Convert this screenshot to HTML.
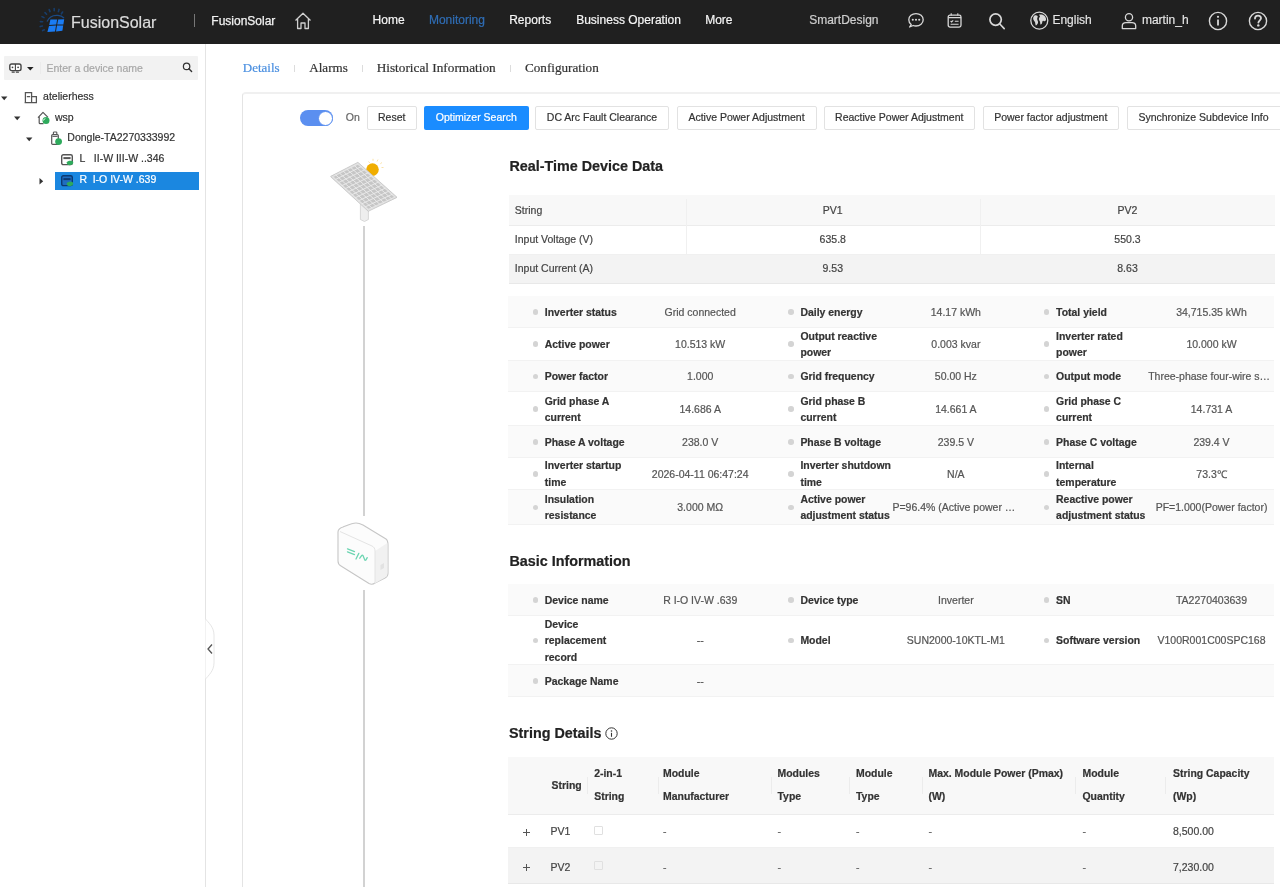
<!DOCTYPE html>
<html><head><meta charset="utf-8">
<style>
html,body{margin:0;padding:0;}
body{width:1280px;height:887px;overflow:hidden;position:relative;background:#fff;font-family:'Liberation Sans', sans-serif;}
.t{position:absolute;white-space:nowrap;line-height:1;-webkit-text-stroke-width:0.2px;}
svg{position:absolute;overflow:visible;}
</style></head><body>
<div style="position:absolute;left:0;top:0;width:1280px;height:887px;overflow:hidden;will-change:transform;background:#fff">

<div style="position:absolute;left:0px;top:0px;width:1280px;height:44px;background:#202020"></div>
<svg style="left:34px;top:4px" width="36" height="34" viewBox="0 0 36 34">
<g stroke="#173d6b" stroke-width="1.6" stroke-linecap="round">
<path d="M6.2 22.6 L8.4 22"/><path d="M6.4 17.6 L8.6 17.8"/><path d="M8 12.6 L10 13.6"/>
<path d="M11 8.6 L12.6 10.2"/><path d="M15.2 5.6 L16 7.6"/><path d="M20.2 4.6 L20.2 6.8"/>
<path d="M25 5.4 L24.4 7.6"/><path d="M28.6 8 L27.4 9.8"/><path d="M8.6 26.6 L10.4 25.8"/>
</g>
<path d="M13 17.6 C15 13 19.5 11 24 11.4 C26.5 11.6 28.5 12.6 30 14" stroke="#1b4a85" stroke-width="1.3" fill="none"/>
<g fill="#1a7cf5">
<polygon points="16.4,15.6 23.2,15.4 22.2,20.6 15.2,21"/>
<polygon points="24.2,15.4 30.2,15.2 29.4,20.4 23.2,20.6"/>
<polygon points="15,22 22,21.6 21,27.4 13.4,28"/>
<polygon points="23,21.6 29.2,21.4 28.4,26.8 22,27.4"/>
</g></svg>
<div class="t" style="left:71.00px;top:14.86px;font-size:16px;color:#dcdcdc;font-weight:normal;font-family:'Liberation Sans', sans-serif;">FusionSolar</div>
<div style="position:absolute;left:194px;top:14px;width:1px;height:13px;background:#777"></div>
<div class="t" style="left:211.30px;top:15.04px;font-size:12px;color:#f2f2f2;font-weight:normal;font-family:'Liberation Sans', sans-serif;-webkit-text-stroke:0.25px #f2f2f2;">FusionSolar</div>
<svg style="left:294px;top:12px" width="18" height="18" viewBox="0 0 18 18">
<path d="M1.5 8.5 L9 1.2 L16.5 8.5 M3.6 6.8 V16.5 H7 V11 H11 V16.5 H14.4 V6.8" fill="none" stroke="#d0d0d0" stroke-width="1.3" stroke-linejoin="round"/>
</svg>
<div class="t" style="left:372.60px;top:13.74px;font-size:12px;color:#f5f5f5;font-weight:normal;font-family:'Liberation Sans', sans-serif;-webkit-text-stroke:0.2px #f5f5f5;">Home</div>
<div class="t" style="left:428.90px;top:13.74px;font-size:12px;color:#2f6db5;font-weight:normal;font-family:'Liberation Sans', sans-serif;">Monitoring</div>
<div class="t" style="left:509.20px;top:13.74px;font-size:12px;color:#f5f5f5;font-weight:normal;font-family:'Liberation Sans', sans-serif;-webkit-text-stroke:0.2px #f5f5f5;">Reports</div>
<div class="t" style="left:576.20px;top:13.74px;font-size:12px;color:#f5f5f5;font-weight:normal;font-family:'Liberation Sans', sans-serif;-webkit-text-stroke:0.2px #f5f5f5;">Business Operation</div>
<div class="t" style="left:705.20px;top:13.74px;font-size:12px;color:#f5f5f5;font-weight:normal;font-family:'Liberation Sans', sans-serif;-webkit-text-stroke:0.2px #f5f5f5;">More</div>
<div class="t" style="left:809.20px;top:13.74px;font-size:12px;color:#cfcfcf;font-weight:normal;font-family:'Liberation Sans', sans-serif;">SmartDesign</div>
<svg style="left:907px;top:12px" width="18" height="17" viewBox="0 0 18 17">
<path d="M4.2 12.6 C2.6 11.4 1.8 9.8 1.8 7.8 C1.8 4.2 5 1.6 9 1.6 C13 1.6 16.2 4.2 16.2 7.8 C16.2 11.4 13 14 9 14 C8 14 7 13.8 6.2 13.5 L2.6 15 Z" fill="none" stroke="#d8d8d8" stroke-width="1.3" stroke-linejoin="round"/>
<circle cx="5.8" cy="7.8" r="1.05" fill="#d8d8d8"/><circle cx="9" cy="7.8" r="1.05" fill="#d8d8d8"/><circle cx="12.2" cy="7.8" r="1.05" fill="#d8d8d8"/>
</svg>
<svg style="left:946px;top:12px" width="17" height="17" viewBox="0 0 17 17">
<rect x="2.2" y="3.2" width="12.8" height="11.9" rx="1.8" fill="none" stroke="#d8d8d8" stroke-width="1.3"/>
<path d="M5.2 1.2 V3.6 M11.8 1.2 V3.6 M2.2 5.6 H15 M4.6 9 L5.6 10 L7.2 8.4 M8.8 9.2 H12.6 M4.6 12.2 H12.6" fill="none" stroke="#d8d8d8" stroke-width="1.1"/>
</svg>
<svg style="left:988px;top:12px" width="18" height="18" viewBox="0 0 18 18">
<circle cx="7.6" cy="7.6" r="5.7" fill="none" stroke="#d8d8d8" stroke-width="1.7"/>
<path d="M11.6 11.8 L16.2 16.6" stroke="#d8d8d8" stroke-width="1.6" stroke-linecap="round"/>
</svg>
<svg style="left:1030px;top:11px" width="19" height="19" viewBox="0 0 19 19">
<circle cx="9.3" cy="9.6" r="8.5" fill="none" stroke="#d8d8d8" stroke-width="1.3"/>
<path d="M4.5 4.6 C5.5 4 7 4.2 7.6 5 C8 6 7 7 7.2 8.2 C7.4 9.5 8.4 10.6 8 12 C7.6 13.2 6.6 14.2 5.8 14.6 C5.2 13 5.4 11.4 4.6 10.4 C3.6 9.4 3 8.2 3.2 6.8 C3.4 5.8 3.8 5 4.5 4.6 Z" fill="#d8d8d8"/>
<path d="M9.2 3.6 C11 3.2 13 3.6 14.4 4.8 C15.6 6 16.2 7.4 16 9 C15.4 10.2 14.4 10.6 13.6 10 C12.8 9.4 12.4 10.4 12.2 11.6 C12 12.8 11.2 13.8 10.6 13.6 C10 12.6 10.4 11.2 9.8 10.2 C9.2 9.2 8.6 8.4 9 7.2 C9.4 6.2 10.4 5.8 9.8 5 C9.4 4.6 9 4.2 9.2 3.6 Z" fill="#d8d8d8"/>
</svg>
<div class="t" style="left:1052.40px;top:13.64px;font-size:12px;color:#e6e6e6;font-weight:normal;font-family:'Liberation Sans', sans-serif;-webkit-text-stroke:0.15px #e6e6e6;">English</div>
<svg style="left:1121px;top:12px" width="16" height="18" viewBox="0 0 16 18">
<circle cx="8" cy="5.2" r="3.6" fill="none" stroke="#d8d8d8" stroke-width="1.3"/>
<path d="M1.3 16.6 V13.8 C1.3 11.6 3 10.6 5 10.6 H11 C13 10.6 14.7 11.6 14.7 13.8 V16.6 Z" fill="none" stroke="#d8d8d8" stroke-width="1.3" stroke-linejoin="round"/>
</svg>
<div class="t" style="left:1141.90px;top:13.64px;font-size:12px;color:#e6e6e6;font-weight:normal;font-family:'Liberation Sans', sans-serif;-webkit-text-stroke:0.15px #e6e6e6;">martin_h</div>
<svg style="left:1208px;top:11px" width="20" height="20" viewBox="0 0 20 20">
<circle cx="10" cy="10" r="8.6" fill="none" stroke="#d8d8d8" stroke-width="1.4"/>
<circle cx="10" cy="5.8" r="1.1" fill="#d8d8d8"/><path d="M10 8.4 V14.6" stroke="#d8d8d8" stroke-width="1.8"/>
</svg>
<svg style="left:1248px;top:11px" width="20" height="20" viewBox="0 0 20 20">
<circle cx="10" cy="10" r="8.6" fill="none" stroke="#d8d8d8" stroke-width="1.4"/>
<path d="M7 7.6 C7 5.6 8.4 4.6 10 4.6 C11.8 4.6 13 5.8 13 7.3 C13 9.2 10.6 9.4 10.4 11.6" fill="none" stroke="#d8d8d8" stroke-width="1.8" stroke-linecap="round"/>
<circle cx="10.3" cy="14.4" r="1.2" fill="#d8d8d8"/>
</svg>
<div style="position:absolute;left:205px;top:44px;width:1px;height:843px;background:#e4e4e4"></div>
<div style="position:absolute;left:3.7px;top:56.2px;width:194.6px;height:23.5px;background:#f2f2f2;border-radius:1px"></div>
<svg style="left:9px;top:63px" width="13" height="11" viewBox="0 0 13 11">
<rect x="0.8" y="1" width="11.2" height="6.6" rx="1.8" fill="#fff" stroke="#444" stroke-width="1.4"/>
<path d="M6.4 1 V7.6" stroke="#444" stroke-width="1.1"/>
<circle cx="3.5" cy="4.3" r="0.9" fill="#444"/><circle cx="9.1" cy="4.3" r="0.9" fill="#444"/>
<path d="M3.2 9.2 H5.2 M7.4 9.2 H9.4" stroke="#444" stroke-width="1.2" stroke-linecap="round"/>
</svg>
<svg style="left:27px;top:66.8px" width="7" height="4" viewBox="0 0 7 4"><path d="M0 0 H6.6 L3.3 3.4 Z" fill="#222"/></svg>
<div style="position:absolute;left:39.5px;top:62px;width:1px;height:12px;background:#ebebeb"></div>
<div class="t" style="left:46.50px;top:62.71px;font-size:10.5px;color:#a8a8a8;font-weight:normal;font-family:'Liberation Sans', sans-serif;">Enter a device name</div>
<svg style="left:182px;top:62px" width="11" height="11" viewBox="0 0 11 11">
<circle cx="4.6" cy="4.4" r="3.2" fill="none" stroke="#333" stroke-width="1.25"/>
<path d="M6.9 6.8 L9.6 9.5" stroke="#333" stroke-width="1.4" stroke-linecap="round"/>
</svg>
<svg style="left:1.2px;top:95.5px" width="7" height="5" viewBox="0 0 7 5"><path d="M0 0.5 H6.4 L3.2 4.2 Z" fill="#333"/></svg>
<svg style="left:24px;top:91px" width="14" height="13" viewBox="0 0 14 13">
<path d="M1.4 11.6 V1.6 H7.6 V11.6 M7.6 5.6 H12.4 V11.6 M0.6 11.6 H13 M2.8 5.6 H6.2" fill="none" stroke="#555" stroke-width="1.25"/>
</svg>
<div class="t" style="left:43.10px;top:91.31px;font-size:10.5px;color:#333;font-weight:normal;font-family:'Liberation Sans', sans-serif;">atelierhess</div>
<svg style="left:13.5px;top:116px" width="7" height="5" viewBox="0 0 7 5"><path d="M0 0.5 H6.4 L3.2 4.2 Z" fill="#333"/></svg>
<svg style="left:37px;top:111px" width="13" height="14" viewBox="0 0 13 14">
<path d="M1 6.6 L6 1.4 L11 6.4 M2.2 5.6 V11.8 C2.2 12.4 2.6 12.7 3.2 12.7 H6.5" fill="none" stroke="#555" stroke-width="1.2" stroke-linejoin="round"/>
<circle cx="9" cy="9.6" r="3.5" fill="#2eaa5c"/>
<path d="M6 9.4 L8.4 7.4" stroke="#fff" stroke-width="0.9"/>
</svg>
<div class="t" style="left:55.00px;top:111.81px;font-size:10.5px;color:#333;font-weight:normal;font-family:'Liberation Sans', sans-serif;">wsp</div>
<svg style="left:25.8px;top:137px" width="7" height="5" viewBox="0 0 7 5"><path d="M0 0.5 H6.4 L3.2 4.2 Z" fill="#333"/></svg>
<svg style="left:50px;top:131px" width="12" height="15" viewBox="0 0 12 15">
<path d="M3.4 3.6 V1.6 C3.4 1.2 3.7 1 4.1 1 H6.1 C6.5 1 6.8 1.2 6.8 1.6 V3.6" fill="none" stroke="#555" stroke-width="1.1"/>
<rect x="1.7" y="3.6" width="6.6" height="9.8" rx="1" fill="#fff" stroke="#555" stroke-width="1.2"/>
<path d="M2.4 5.4 H7.6" stroke="#555" stroke-width="1"/>
<circle cx="8.6" cy="10.6" r="3.4" fill="#2eaa5c"/>
</svg>
<div class="t" style="left:67.30px;top:132.41px;font-size:10.5px;color:#333;font-weight:normal;font-family:'Liberation Sans', sans-serif;">Dongle-TA2270333992</div>
<svg style="left:61px;top:153.5px" width="13" height="12" viewBox="0 0 13 12">
<rect x="0.7" y="0.7" width="10.6" height="9.9" rx="1.6" fill="#fff" stroke="#555" stroke-width="1.4"/>
<path d="M2.4 4.1 H9.6" stroke="#555" stroke-width="2"/>
<path d="M5.5 8.6 C6.5 6.8 8.6 6.4 10.6 6.8 C12.2 7.2 12.6 8.4 12 9.6 C11.2 11.2 8.4 11.6 6.6 10.8 Z" fill="#2eaa5c"/>
</svg>
<div class="t" style="left:79.50px;top:153.11px;font-size:10.5px;color:#333;font-weight:normal;font-family:'Liberation Sans', sans-serif;">L</div>
<div class="t" style="left:93.80px;top:153.11px;font-size:10.5px;color:#333;font-weight:normal;font-family:'Liberation Sans', sans-serif;">II-W III-W ..346</div>
<svg style="left:39px;top:177.5px" width="5" height="7" viewBox="0 0 5 7"><path d="M0.5 0 V6.4 L4.2 3.2 Z" fill="#333"/></svg>
<div style="position:absolute;left:55px;top:171.5px;width:143.7px;height:18.5px;background:#1b87e0"></div>
<svg style="left:61px;top:175px" width="13" height="12" viewBox="0 0 13 12">
<rect x="0.7" y="0.7" width="10.6" height="9.9" rx="1.6" fill="#1f6cc0" stroke="#0c3a72" stroke-width="1.4"/>
<path d="M2.4 4.1 H9.6" stroke="#0c3a72" stroke-width="2"/>
<path d="M5.5 8.6 C6.5 6.8 8.6 6.4 10.6 6.8 C12.2 7.2 12.6 8.4 12 9.6 C11.2 11.2 8.4 11.6 6.6 10.8 Z" fill="#2eaa5c"/>
</svg>
<div class="t" style="left:79.50px;top:173.81px;font-size:10.5px;color:#fff;font-weight:normal;font-family:'Liberation Sans', sans-serif;">R</div>
<div class="t" style="left:92.70px;top:173.81px;font-size:10.5px;color:#fff;font-weight:normal;font-family:'Liberation Sans', sans-serif;">I-O IV-W .639</div>
<svg style="left:205px;top:617px" width="12" height="64" viewBox="0 0 12 64">
<path d="M0.5 2 C3 5 9 10 9 18 V46 C9 54 3 59 0.5 62" fill="#fff" stroke="#e6e6e6" stroke-width="1"/>
<path d="M7 27.5 L3 32 L7 36.5" fill="none" stroke="#555" stroke-width="1.3"/>
</svg>
<div class="t" style="left:242.80px;top:61.01px;font-size:13px;color:#4a8fe0;font-weight:normal;font-family:'Liberation Serif', serif;">Details</div>
<div style="position:absolute;left:294px;top:64.5px;width:1px;height:7px;background:#dcdcdc"></div>
<div class="t" style="left:309.30px;top:60.97px;font-size:13.05px;color:#333;font-weight:normal;font-family:'Liberation Serif', serif;">Alarms</div>
<div style="position:absolute;left:362px;top:64.5px;width:1px;height:7px;background:#dcdcdc"></div>
<div class="t" style="left:376.70px;top:60.79px;font-size:13.27px;color:#333;font-weight:normal;font-family:'Liberation Serif', serif;">Historical Information</div>
<div style="position:absolute;left:510px;top:64.5px;width:1px;height:7px;background:#dcdcdc"></div>
<div class="t" style="left:525.00px;top:60.89px;font-size:13.15px;color:#333;font-weight:normal;font-family:'Liberation Serif', serif;">Configuration</div>
<div style="position:absolute;left:242px;top:92px;width:1100px;height:900px;border-left:1px solid #e4e4e4;border-top:2px solid #f0f0f0;box-sizing:border-box;border-radius:4px 0 0 0"></div>
<div style="position:absolute;left:300px;top:110px;width:33px;height:16px;background:#5b8ff0;border-radius:8px"></div>
<div style="position:absolute;left:318px;top:110.5px;width:15px;height:15px;background:#fff;border-radius:50%;border:1px solid #5b8ff0;box-sizing:border-box"></div>
<div class="t" style="left:345.80px;top:112.41px;font-size:10.5px;color:#666;font-weight:normal;font-family:'Liberation Sans', sans-serif;">On</div>
<div style="position:absolute;left:366.6px;top:105.5px;width:50.3px;height:24px;border:1px solid #e2e2e2;border-radius:2px;box-sizing:border-box;background:#fff"></div>
<div class="t" style="left:366.60px;width:50.3px;text-align:center;top:112.11px;font-size:10.5px;color:#333;font-weight:normal;">Reset</div>
<div style="position:absolute;left:423.9px;top:105.5px;width:104.8px;height:24px;background:#1a8cff;border-radius:2px"></div>
<div class="t" style="left:423.90px;width:104.8px;text-align:center;top:112.11px;font-size:10.5px;color:#fff;font-weight:normal;">Optimizer Search</div>
<div style="position:absolute;left:535px;top:105.5px;width:134px;height:24px;border:1px solid #e2e2e2;border-radius:2px;box-sizing:border-box;background:#fff"></div>
<div class="t" style="left:535.00px;width:134px;text-align:center;top:112.11px;font-size:10.5px;color:#333;font-weight:normal;">DC Arc Fault Clearance</div>
<div style="position:absolute;left:676.5px;top:105.5px;width:140px;height:24px;border:1px solid #e2e2e2;border-radius:2px;box-sizing:border-box;background:#fff"></div>
<div class="t" style="left:676.50px;width:140px;text-align:center;top:112.11px;font-size:10.5px;color:#333;font-weight:normal;">Active Power Adjustment</div>
<div style="position:absolute;left:823.5px;top:105.5px;width:151.5px;height:24px;border:1px solid #e2e2e2;border-radius:2px;box-sizing:border-box;background:#fff"></div>
<div class="t" style="left:823.50px;width:151.5px;text-align:center;top:112.11px;font-size:10.5px;color:#333;font-weight:normal;">Reactive Power Adjustment</div>
<div style="position:absolute;left:982.5px;top:105.5px;width:136.5px;height:24px;border:1px solid #e2e2e2;border-radius:2px;box-sizing:border-box;background:#fff"></div>
<div class="t" style="left:982.50px;width:136.5px;text-align:center;top:112.11px;font-size:10.5px;color:#333;font-weight:normal;">Power factor adjustment</div>
<div style="position:absolute;left:1126.5px;top:105.5px;width:170px;height:24px;border:1px solid #e2e2e2;border-radius:2px;box-sizing:border-box;background:#fff"></div>
<div class="t" style="left:1118.50px;width:170px;text-align:center;top:112.11px;font-size:10.5px;color:#333;font-weight:normal;">Synchronize Subdevice Info</div>
<svg style="left:325px;top:150px" width="80" height="80" viewBox="0 0 80 80">
<g stroke="#f5c040" stroke-width="1" opacity="0.45">
<path d="M43.5 11.5 L44.8 13 M48 8.8 V10.8 M53 9.5 L52 11.6 M57 12.5 L55.3 13.8 M58.5 17.5 H56.5"/>
</g>
<circle cx="47.5" cy="19.6" r="6.3" fill="#f0ad00"/>
<path d="M35.4 53 V69.5 L39.5 71.5 L43.4 69.5 V58" fill="#eeeeee" stroke="#cfcfcf" stroke-width="0.8"/>
<polygon points="32.9,13.5 6.8,26.6 43.3,60 70.8,47.3" fill="#c6c6c6" stroke="#e2e2e2" stroke-width="2.2" stroke-linejoin="round"/>
<polygon points="32.9,12.3 5.6,26.5 43.3,61.3 72,47.3" fill="none" stroke="#c0c0c0" stroke-width="0.7" stroke-linejoin="round"/>
<path d="M10.53 24.73 L47.23 58.19 M14.26 22.86 L51.16 56.37 M17.99 20.99 L55.09 54.56 M21.71 19.11 L59.01 52.74 M25.44 17.24 L62.94 50.93 M29.17 15.37 L66.87 49.11 M36.35 16.57 L10.12 29.64 M39.79 19.65 L13.44 32.67 M43.24 22.72 L16.75 35.71 M46.68 25.79 L20.07 38.75 M50.13 28.86 L23.39 41.78 M53.57 31.94 L26.71 44.82 M57.02 35.01 L30.03 47.85 M60.46 38.08 L33.35 50.89 M63.91 41.15 L36.66 53.93 M67.35 44.23 L39.98 56.96" stroke="#ececec" stroke-width="0.9" fill="none"/>
</svg>
<div style="position:absolute;left:363.2px;top:226px;width:1.4px;height:290px;background:#d2d2d2"></div>
<div style="position:absolute;left:363.2px;top:590.2px;width:1.4px;height:300px;background:#d2d2d2"></div>
<svg style="left:330px;top:515px" width="65" height="80" viewBox="0 0 65 80">
<path d="M8 17 C8 14 10 13 13 12 C18 10 22 8 26 8 C29 8 31 9 33 10 L56 24 C58 25.5 58 27 58 30 V58 C58 61 57 62 55 63 L45 68 C43 69.5 41 69.5 39 68.5 L11 51 C9 50 8 48 8 46 Z" fill="#fcfcfc" stroke="#c6c6c6" stroke-width="1.1"/>
<path d="M45 36 L57.4 28 V58 C57.4 60.6 56.6 61.6 55 62.6 L45 68.2 Z" fill="#f1f1f1"/>
<path d="M10 16.5 L42 31 C44 32 45 33.5 45 36 V68.5" fill="none" stroke="#e4e4e4" stroke-width="1"/>
<path d="M50.5 50 L54 48 V53 L50.5 55 Z" fill="#e2e2e2"/>
<g stroke="#6dd5b2" stroke-width="1.3" fill="none" stroke-linecap="round">
<path d="M17.5 33.8 L24.5 36.6 M17.5 36.8 L24.5 39.6 M26 44 L28.8 38.4 M29.8 43.2 L31.6 40.6 C32 40 32.6 40 33 40.6 L34.6 44.6 C35 45.4 35.6 45.4 36 44.8 L37.2 42.6"/>
</g>
</svg>
<div class="t" style="left:509.40px;top:159.35px;font-size:14.35px;color:#222;font-weight:bold;font-family:'Liberation Sans', sans-serif;">Real-Time Device Data</div>
<div style="position:absolute;left:509px;top:195px;width:766px;height:30.5px;background:#f8f8f8;border-bottom:1px solid #ececec;box-sizing:border-box"></div>
<div style="position:absolute;left:509px;top:225.5px;width:766px;height:29px;background:#fff;border-bottom:1px solid #f0f0f0;box-sizing:border-box"></div>
<div style="position:absolute;left:509px;top:254.5px;width:766px;height:29px;background:#f3f3f3;border-bottom:1px solid #e8e8e8;box-sizing:border-box"></div>
<div style="position:absolute;left:685.5px;top:199px;width:1px;height:55px;background:#f0f0f0"></div>
<div style="position:absolute;left:979.5px;top:199px;width:1px;height:55px;background:#f0f0f0"></div>
<div class="t" style="left:514.80px;top:204.81px;font-size:10.5px;color:#444;font-weight:normal;font-family:'Liberation Sans', sans-serif;">String</div>
<div class="t" style="left:682.75px;width:300px;text-align:center;top:204.81px;font-size:10.5px;color:#444;font-weight:normal;">PV1</div>
<div class="t" style="left:977.50px;width:300px;text-align:center;top:204.81px;font-size:10.5px;color:#444;font-weight:normal;">PV2</div>
<div class="t" style="left:514.80px;top:234.41px;font-size:10.5px;color:#444;font-weight:normal;font-family:'Liberation Sans', sans-serif;">Input Voltage (V)</div>
<div class="t" style="left:682.75px;width:300px;text-align:center;top:234.41px;font-size:10.5px;color:#444;font-weight:normal;">635.8</div>
<div class="t" style="left:977.50px;width:300px;text-align:center;top:234.41px;font-size:10.5px;color:#444;font-weight:normal;">550.3</div>
<div class="t" style="left:514.80px;top:263.31px;font-size:10.5px;color:#444;font-weight:normal;font-family:'Liberation Sans', sans-serif;">Input Current (A)</div>
<div class="t" style="left:682.75px;width:300px;text-align:center;top:263.31px;font-size:10.5px;color:#444;font-weight:normal;">9.53</div>
<div class="t" style="left:977.50px;width:300px;text-align:center;top:263.31px;font-size:10.5px;color:#444;font-weight:normal;">8.63</div>
<div style="position:absolute;left:508px;top:296px;width:766px;height:31.5px;background:#fafafa;border-bottom:1px solid #f2f2f2;box-sizing:border-box"></div>
<div style="position:absolute;left:532.6px;top:309.0px;width:5.5px;height:5.5px;background:#d4d4d4;border-radius:50%"></div>
<div class="t" style="left:544.75px;top:307.50px;font-size:10.45px;color:#333;font-weight:bold;font-family:'Liberation Sans', sans-serif;">Inverter status</div>
<div class="t" style="left:637.20px;width:126px;text-align:center;top:306.66px;font-size:10.5px;color:#555;font-weight:normal;">Grid connected</div>
<div style="position:absolute;left:788.27px;top:309.0px;width:5.5px;height:5.5px;background:#d4d4d4;border-radius:50%"></div>
<div class="t" style="left:800.42px;top:307.50px;font-size:10.45px;color:#333;font-weight:bold;font-family:'Liberation Sans', sans-serif;">Daily energy</div>
<div class="t" style="left:892.87px;width:126px;text-align:center;top:306.66px;font-size:10.5px;color:#555;font-weight:normal;">14.17 kWh</div>
<div style="position:absolute;left:1043.93px;top:309.0px;width:5.5px;height:5.5px;background:#d4d4d4;border-radius:50%"></div>
<div class="t" style="left:1056.08px;top:307.50px;font-size:10.45px;color:#333;font-weight:bold;font-family:'Liberation Sans', sans-serif;">Total yield</div>
<div class="t" style="left:1148.53px;width:126px;text-align:center;top:306.66px;font-size:10.5px;color:#555;font-weight:normal;">34,715.35 kWh</div>
<div style="position:absolute;left:508px;top:327.5px;width:766px;height:33px;background:#fff;border-bottom:1px solid #f2f2f2;box-sizing:border-box"></div>
<div style="position:absolute;left:532.6px;top:341.25px;width:5.5px;height:5.5px;background:#d4d4d4;border-radius:50%"></div>
<div class="t" style="left:544.75px;top:339.75px;font-size:10.45px;color:#333;font-weight:bold;font-family:'Liberation Sans', sans-serif;">Active power</div>
<div class="t" style="left:637.20px;width:126px;text-align:center;top:338.91px;font-size:10.5px;color:#555;font-weight:normal;">10.513 kW</div>
<div style="position:absolute;left:788.27px;top:341.25px;width:5.5px;height:5.5px;background:#d4d4d4;border-radius:50%"></div>
<div class="t" style="left:800.42px;top:331.58px;font-size:10.45px;color:#333;font-weight:bold;font-family:'Liberation Sans', sans-serif;">Output reactive</div>
<div class="t" style="left:800.42px;top:347.93px;font-size:10.45px;color:#333;font-weight:bold;font-family:'Liberation Sans', sans-serif;">power</div>
<div class="t" style="left:892.87px;width:126px;text-align:center;top:338.91px;font-size:10.5px;color:#555;font-weight:normal;">0.003 kvar</div>
<div style="position:absolute;left:1043.93px;top:341.25px;width:5.5px;height:5.5px;background:#d4d4d4;border-radius:50%"></div>
<div class="t" style="left:1056.08px;top:331.58px;font-size:10.45px;color:#333;font-weight:bold;font-family:'Liberation Sans', sans-serif;">Inverter rated</div>
<div class="t" style="left:1056.08px;top:347.93px;font-size:10.45px;color:#333;font-weight:bold;font-family:'Liberation Sans', sans-serif;">power</div>
<div class="t" style="left:1148.53px;width:126px;text-align:center;top:338.91px;font-size:10.5px;color:#555;font-weight:normal;">10.000 kW</div>
<div style="position:absolute;left:508px;top:360.5px;width:766px;height:31.5px;background:#fafafa;border-bottom:1px solid #f2f2f2;box-sizing:border-box"></div>
<div style="position:absolute;left:532.6px;top:373.5px;width:5.5px;height:5.5px;background:#d4d4d4;border-radius:50%"></div>
<div class="t" style="left:544.75px;top:372.00px;font-size:10.45px;color:#333;font-weight:bold;font-family:'Liberation Sans', sans-serif;">Power factor</div>
<div class="t" style="left:637.20px;width:126px;text-align:center;top:371.16px;font-size:10.5px;color:#555;font-weight:normal;">1.000</div>
<div style="position:absolute;left:788.27px;top:373.5px;width:5.5px;height:5.5px;background:#d4d4d4;border-radius:50%"></div>
<div class="t" style="left:800.42px;top:372.00px;font-size:10.45px;color:#333;font-weight:bold;font-family:'Liberation Sans', sans-serif;">Grid frequency</div>
<div class="t" style="left:892.87px;width:126px;text-align:center;top:371.16px;font-size:10.5px;color:#555;font-weight:normal;">50.00 Hz</div>
<div style="position:absolute;left:1043.93px;top:373.5px;width:5.5px;height:5.5px;background:#d4d4d4;border-radius:50%"></div>
<div class="t" style="left:1056.08px;top:372.00px;font-size:10.45px;color:#333;font-weight:bold;font-family:'Liberation Sans', sans-serif;">Output mode</div>
<div class="t" style="left:1148.13px;top:371.16px;font-size:10.5px;color:#555;font-weight:normal;font-family:'Liberation Sans', sans-serif;">Three-phase four-wire s&#8230;</div>
<div style="position:absolute;left:508px;top:392.0px;width:766px;height:34px;background:#fff;border-bottom:1px solid #f2f2f2;box-sizing:border-box"></div>
<div style="position:absolute;left:532.6px;top:406.25px;width:5.5px;height:5.5px;background:#d4d4d4;border-radius:50%"></div>
<div class="t" style="left:544.75px;top:396.58px;font-size:10.45px;color:#333;font-weight:bold;font-family:'Liberation Sans', sans-serif;">Grid phase A</div>
<div class="t" style="left:544.75px;top:412.93px;font-size:10.45px;color:#333;font-weight:bold;font-family:'Liberation Sans', sans-serif;">current</div>
<div class="t" style="left:637.20px;width:126px;text-align:center;top:403.91px;font-size:10.5px;color:#555;font-weight:normal;">14.686 A</div>
<div style="position:absolute;left:788.27px;top:406.25px;width:5.5px;height:5.5px;background:#d4d4d4;border-radius:50%"></div>
<div class="t" style="left:800.42px;top:396.58px;font-size:10.45px;color:#333;font-weight:bold;font-family:'Liberation Sans', sans-serif;">Grid phase B</div>
<div class="t" style="left:800.42px;top:412.93px;font-size:10.45px;color:#333;font-weight:bold;font-family:'Liberation Sans', sans-serif;">current</div>
<div class="t" style="left:892.87px;width:126px;text-align:center;top:403.91px;font-size:10.5px;color:#555;font-weight:normal;">14.661 A</div>
<div style="position:absolute;left:1043.93px;top:406.25px;width:5.5px;height:5.5px;background:#d4d4d4;border-radius:50%"></div>
<div class="t" style="left:1056.08px;top:396.58px;font-size:10.45px;color:#333;font-weight:bold;font-family:'Liberation Sans', sans-serif;">Grid phase C</div>
<div class="t" style="left:1056.08px;top:412.93px;font-size:10.45px;color:#333;font-weight:bold;font-family:'Liberation Sans', sans-serif;">current</div>
<div class="t" style="left:1148.53px;width:126px;text-align:center;top:403.91px;font-size:10.5px;color:#555;font-weight:normal;">14.731 A</div>
<div style="position:absolute;left:508px;top:426.0px;width:766px;height:31.5px;background:#fafafa;border-bottom:1px solid #f2f2f2;box-sizing:border-box"></div>
<div style="position:absolute;left:532.6px;top:439.0px;width:5.5px;height:5.5px;background:#d4d4d4;border-radius:50%"></div>
<div class="t" style="left:544.75px;top:437.50px;font-size:10.45px;color:#333;font-weight:bold;font-family:'Liberation Sans', sans-serif;">Phase A voltage</div>
<div class="t" style="left:637.20px;width:126px;text-align:center;top:436.66px;font-size:10.5px;color:#555;font-weight:normal;">238.0 V</div>
<div style="position:absolute;left:788.27px;top:439.0px;width:5.5px;height:5.5px;background:#d4d4d4;border-radius:50%"></div>
<div class="t" style="left:800.42px;top:437.50px;font-size:10.45px;color:#333;font-weight:bold;font-family:'Liberation Sans', sans-serif;">Phase B voltage</div>
<div class="t" style="left:892.87px;width:126px;text-align:center;top:436.66px;font-size:10.5px;color:#555;font-weight:normal;">239.5 V</div>
<div style="position:absolute;left:1043.93px;top:439.0px;width:5.5px;height:5.5px;background:#d4d4d4;border-radius:50%"></div>
<div class="t" style="left:1056.08px;top:437.50px;font-size:10.45px;color:#333;font-weight:bold;font-family:'Liberation Sans', sans-serif;">Phase C voltage</div>
<div class="t" style="left:1148.53px;width:126px;text-align:center;top:436.66px;font-size:10.5px;color:#555;font-weight:normal;">239.4 V</div>
<div style="position:absolute;left:508px;top:457.5px;width:766px;height:32.5px;background:#fff;border-bottom:1px solid #f2f2f2;box-sizing:border-box"></div>
<div style="position:absolute;left:532.6px;top:471.0px;width:5.5px;height:5.5px;background:#d4d4d4;border-radius:50%"></div>
<div class="t" style="left:544.75px;top:461.33px;font-size:10.45px;color:#333;font-weight:bold;font-family:'Liberation Sans', sans-serif;">Inverter startup</div>
<div class="t" style="left:544.75px;top:477.68px;font-size:10.45px;color:#333;font-weight:bold;font-family:'Liberation Sans', sans-serif;">time</div>
<div class="t" style="left:637.20px;width:126px;text-align:center;top:468.66px;font-size:10.5px;color:#555;font-weight:normal;">2026-04-11 06:47:24</div>
<div style="position:absolute;left:788.27px;top:471.0px;width:5.5px;height:5.5px;background:#d4d4d4;border-radius:50%"></div>
<div class="t" style="left:800.42px;top:461.33px;font-size:10.45px;color:#333;font-weight:bold;font-family:'Liberation Sans', sans-serif;">Inverter shutdown</div>
<div class="t" style="left:800.42px;top:477.68px;font-size:10.45px;color:#333;font-weight:bold;font-family:'Liberation Sans', sans-serif;">time</div>
<div class="t" style="left:892.87px;width:126px;text-align:center;top:468.66px;font-size:10.5px;color:#555;font-weight:normal;">N/A</div>
<div style="position:absolute;left:1043.93px;top:471.0px;width:5.5px;height:5.5px;background:#d4d4d4;border-radius:50%"></div>
<div class="t" style="left:1056.08px;top:461.33px;font-size:10.45px;color:#333;font-weight:bold;font-family:'Liberation Sans', sans-serif;">Internal</div>
<div class="t" style="left:1056.08px;top:477.68px;font-size:10.45px;color:#333;font-weight:bold;font-family:'Liberation Sans', sans-serif;">temperature</div>
<div class="t" style="left:1148.53px;width:126px;text-align:center;top:468.66px;font-size:10.5px;color:#555;font-weight:normal;">73.3&#8451;</div>
<div style="position:absolute;left:508px;top:490.0px;width:766px;height:35px;background:#fafafa;border-bottom:1px solid #f2f2f2;box-sizing:border-box"></div>
<div style="position:absolute;left:532.6px;top:504.75px;width:5.5px;height:5.5px;background:#d4d4d4;border-radius:50%"></div>
<div class="t" style="left:544.75px;top:495.08px;font-size:10.45px;color:#333;font-weight:bold;font-family:'Liberation Sans', sans-serif;">Insulation</div>
<div class="t" style="left:544.75px;top:511.43px;font-size:10.45px;color:#333;font-weight:bold;font-family:'Liberation Sans', sans-serif;">resistance</div>
<div class="t" style="left:637.20px;width:126px;text-align:center;top:502.41px;font-size:10.5px;color:#555;font-weight:normal;">3.000 M&#937;</div>
<div style="position:absolute;left:788.27px;top:504.75px;width:5.5px;height:5.5px;background:#d4d4d4;border-radius:50%"></div>
<div class="t" style="left:800.42px;top:495.08px;font-size:10.45px;color:#333;font-weight:bold;font-family:'Liberation Sans', sans-serif;">Active power</div>
<div class="t" style="left:800.42px;top:511.43px;font-size:10.45px;color:#333;font-weight:bold;font-family:'Liberation Sans', sans-serif;">adjustment status</div>
<div class="t" style="left:892.47px;top:502.41px;font-size:10.5px;color:#555;font-weight:normal;font-family:'Liberation Sans', sans-serif;">P=96.4% (Active power &#8230;</div>
<div style="position:absolute;left:1043.93px;top:504.75px;width:5.5px;height:5.5px;background:#d4d4d4;border-radius:50%"></div>
<div class="t" style="left:1056.08px;top:495.08px;font-size:10.45px;color:#333;font-weight:bold;font-family:'Liberation Sans', sans-serif;">Reactive power</div>
<div class="t" style="left:1056.08px;top:511.43px;font-size:10.45px;color:#333;font-weight:bold;font-family:'Liberation Sans', sans-serif;">adjustment status</div>
<div class="t" style="left:1148.53px;width:126px;text-align:center;top:502.41px;font-size:10.5px;color:#555;font-weight:normal;">PF=1.000(Power factor)</div>
<div class="t" style="left:509.40px;top:553.75px;font-size:14.35px;color:#222;font-weight:bold;font-family:'Liberation Sans', sans-serif;">Basic Information</div>
<div style="position:absolute;left:508px;top:584px;width:766px;height:31.7px;background:#fafafa;border-bottom:1px solid #f2f2f2;box-sizing:border-box"></div>
<div style="position:absolute;left:532.6px;top:597.1px;width:5.5px;height:5.5px;background:#d4d4d4;border-radius:50%"></div>
<div class="t" style="left:544.75px;top:595.60px;font-size:10.45px;color:#333;font-weight:bold;font-family:'Liberation Sans', sans-serif;">Device name</div>
<div class="t" style="left:637.20px;width:126px;text-align:center;top:594.76px;font-size:10.5px;color:#555;font-weight:normal;">R I-O IV-W .639</div>
<div style="position:absolute;left:788.27px;top:597.1px;width:5.5px;height:5.5px;background:#d4d4d4;border-radius:50%"></div>
<div class="t" style="left:800.42px;top:595.60px;font-size:10.45px;color:#333;font-weight:bold;font-family:'Liberation Sans', sans-serif;">Device type</div>
<div class="t" style="left:892.87px;width:126px;text-align:center;top:594.76px;font-size:10.5px;color:#555;font-weight:normal;">Inverter</div>
<div style="position:absolute;left:1043.93px;top:597.1px;width:5.5px;height:5.5px;background:#d4d4d4;border-radius:50%"></div>
<div class="t" style="left:1056.08px;top:595.60px;font-size:10.45px;color:#333;font-weight:bold;font-family:'Liberation Sans', sans-serif;">SN</div>
<div class="t" style="left:1148.53px;width:126px;text-align:center;top:594.76px;font-size:10.5px;color:#555;font-weight:normal;">TA2270403639</div>
<div style="position:absolute;left:508px;top:615.7px;width:766px;height:49.6px;background:#fff;border-bottom:1px solid #f2f2f2;box-sizing:border-box"></div>
<div style="position:absolute;left:532.6px;top:637.75px;width:5.5px;height:5.5px;background:#d4d4d4;border-radius:50%"></div>
<div class="t" style="left:544.75px;top:619.90px;font-size:10.45px;color:#333;font-weight:bold;font-family:'Liberation Sans', sans-serif;">Device</div>
<div class="t" style="left:544.75px;top:636.25px;font-size:10.45px;color:#333;font-weight:bold;font-family:'Liberation Sans', sans-serif;">replacement</div>
<div class="t" style="left:544.75px;top:652.60px;font-size:10.45px;color:#333;font-weight:bold;font-family:'Liberation Sans', sans-serif;">record</div>
<div class="t" style="left:637.20px;width:126px;text-align:center;top:635.41px;font-size:10.5px;color:#555;font-weight:normal;">--</div>
<div style="position:absolute;left:788.27px;top:637.75px;width:5.5px;height:5.5px;background:#d4d4d4;border-radius:50%"></div>
<div class="t" style="left:800.42px;top:636.25px;font-size:10.45px;color:#333;font-weight:bold;font-family:'Liberation Sans', sans-serif;">Model</div>
<div class="t" style="left:892.87px;width:126px;text-align:center;top:635.41px;font-size:10.5px;color:#555;font-weight:normal;">SUN2000-10KTL-M1</div>
<div style="position:absolute;left:1043.93px;top:637.75px;width:5.5px;height:5.5px;background:#d4d4d4;border-radius:50%"></div>
<div class="t" style="left:1056.08px;top:636.25px;font-size:10.45px;color:#333;font-weight:bold;font-family:'Liberation Sans', sans-serif;">Software version</div>
<div class="t" style="left:1148.53px;width:126px;text-align:center;top:635.41px;font-size:10.5px;color:#555;font-weight:normal;">V100R001C00SPC168</div>
<div style="position:absolute;left:508px;top:665.3000000000001px;width:766px;height:31.6px;background:#fafafa;border-bottom:1px solid #f2f2f2;box-sizing:border-box"></div>
<div style="position:absolute;left:532.6px;top:678.35px;width:5.5px;height:5.5px;background:#d4d4d4;border-radius:50%"></div>
<div class="t" style="left:544.75px;top:676.85px;font-size:10.45px;color:#333;font-weight:bold;font-family:'Liberation Sans', sans-serif;">Package Name</div>
<div class="t" style="left:637.20px;width:126px;text-align:center;top:676.01px;font-size:10.5px;color:#555;font-weight:normal;">--</div>
<div class="t" style="left:509.00px;top:725.75px;font-size:14.35px;color:#222;font-weight:bold;font-family:'Liberation Sans', sans-serif;">String Details</div>
<svg style="left:605px;top:727px" width="14" height="14" viewBox="0 0 14 14">
<circle cx="6.5" cy="6.5" r="5.7" fill="none" stroke="#333" stroke-width="1"/>
<circle cx="6.5" cy="4" r="0.8" fill="#333"/><path d="M6.5 5.8 V9.8" stroke="#333" stroke-width="1.1"/>
</svg>
<div style="position:absolute;left:508px;top:757px;width:766px;height:57.5px;background:#f8f8f8;border-bottom:1px solid #ececec;box-sizing:border-box"></div>
<div style="position:absolute;left:508px;top:814.5px;width:766px;height:33.5px;background:#fff;border-bottom:1px solid #f0f0f0;box-sizing:border-box"></div>
<div style="position:absolute;left:508px;top:848px;width:766px;height:36px;background:#f3f3f3;border-bottom:1px solid #e8e8e8;box-sizing:border-box"></div>
<div style="position:absolute;left:587.4px;top:777px;width:1px;height:17px;background:#ececec"></div>
<div style="position:absolute;left:657.8px;top:777px;width:1px;height:17px;background:#ececec"></div>
<div style="position:absolute;left:771px;top:777px;width:1px;height:17px;background:#ececec"></div>
<div style="position:absolute;left:849px;top:777px;width:1px;height:17px;background:#ececec"></div>
<div style="position:absolute;left:922px;top:777px;width:1px;height:17px;background:#ececec"></div>
<div style="position:absolute;left:1075px;top:777px;width:1px;height:17px;background:#ececec"></div>
<div style="position:absolute;left:1165px;top:777px;width:1px;height:17px;background:#ececec"></div>
<div class="t" style="left:551.50px;top:780.75px;font-size:10.45px;color:#333;font-weight:bold;font-family:'Liberation Sans', sans-serif;">String</div>
<div class="t" style="left:594.20px;top:768.75px;font-size:10.45px;color:#333;font-weight:bold;font-family:'Liberation Sans', sans-serif;">2-in-1</div>
<div class="t" style="left:594.20px;top:792.35px;font-size:10.45px;color:#333;font-weight:bold;font-family:'Liberation Sans', sans-serif;">String</div>
<div class="t" style="left:663.00px;top:768.75px;font-size:10.45px;color:#333;font-weight:bold;font-family:'Liberation Sans', sans-serif;">Module</div>
<div class="t" style="left:663.00px;top:792.35px;font-size:10.45px;color:#333;font-weight:bold;font-family:'Liberation Sans', sans-serif;">Manufacturer</div>
<div class="t" style="left:777.50px;top:768.75px;font-size:10.45px;color:#333;font-weight:bold;font-family:'Liberation Sans', sans-serif;">Modules</div>
<div class="t" style="left:777.50px;top:792.35px;font-size:10.45px;color:#333;font-weight:bold;font-family:'Liberation Sans', sans-serif;">Type</div>
<div class="t" style="left:856.00px;top:768.75px;font-size:10.45px;color:#333;font-weight:bold;font-family:'Liberation Sans', sans-serif;">Module</div>
<div class="t" style="left:856.00px;top:792.35px;font-size:10.45px;color:#333;font-weight:bold;font-family:'Liberation Sans', sans-serif;">Type</div>
<div class="t" style="left:928.50px;top:768.75px;font-size:10.45px;color:#333;font-weight:bold;font-family:'Liberation Sans', sans-serif;">Max. Module Power (Pmax)</div>
<div class="t" style="left:928.50px;top:792.35px;font-size:10.45px;color:#333;font-weight:bold;font-family:'Liberation Sans', sans-serif;">(W)</div>
<div class="t" style="left:1082.50px;top:768.75px;font-size:10.45px;color:#333;font-weight:bold;font-family:'Liberation Sans', sans-serif;">Module</div>
<div class="t" style="left:1082.50px;top:792.35px;font-size:10.45px;color:#333;font-weight:bold;font-family:'Liberation Sans', sans-serif;">Quantity</div>
<div class="t" style="left:1173.00px;top:768.75px;font-size:10.45px;color:#333;font-weight:bold;font-family:'Liberation Sans', sans-serif;">String Capacity</div>
<div class="t" style="left:1173.00px;top:792.35px;font-size:10.45px;color:#333;font-weight:bold;font-family:'Liberation Sans', sans-serif;">(Wp)</div>
<svg style="left:523px;top:829px" width="8" height="8" viewBox="0 0 8 8"><path d="M0 3.5 H7 M3.5 0 V7" stroke="#555" stroke-width="1"/></svg>
<div class="t" style="left:550.60px;top:826.01px;font-size:10.5px;color:#444;font-weight:normal;font-family:'Liberation Sans', sans-serif;">PV1</div>
<div style="position:absolute;left:593.5px;top:825.8px;width:9.5px;height:9.5px;border:1px solid #e0e0e0;border-radius:1px;box-sizing:border-box;background:transparent"></div>
<div class="t" style="left:663.00px;top:826.01px;font-size:10.5px;color:#666;font-weight:normal;font-family:'Liberation Sans', sans-serif;">-</div>
<div class="t" style="left:777.50px;top:826.01px;font-size:10.5px;color:#666;font-weight:normal;font-family:'Liberation Sans', sans-serif;">-</div>
<div class="t" style="left:856.00px;top:826.01px;font-size:10.5px;color:#666;font-weight:normal;font-family:'Liberation Sans', sans-serif;">-</div>
<div class="t" style="left:928.50px;top:826.01px;font-size:10.5px;color:#666;font-weight:normal;font-family:'Liberation Sans', sans-serif;">-</div>
<div class="t" style="left:1082.50px;top:826.01px;font-size:10.5px;color:#666;font-weight:normal;font-family:'Liberation Sans', sans-serif;">-</div>
<div class="t" style="left:1173.00px;top:826.01px;font-size:10.5px;color:#444;font-weight:normal;font-family:'Liberation Sans', sans-serif;">8,500.00</div>
<svg style="left:523px;top:864px" width="8" height="8" viewBox="0 0 8 8"><path d="M0 3.5 H7 M3.5 0 V7" stroke="#555" stroke-width="1"/></svg>
<div class="t" style="left:550.60px;top:861.61px;font-size:10.5px;color:#444;font-weight:normal;font-family:'Liberation Sans', sans-serif;">PV2</div>
<div style="position:absolute;left:593.5px;top:860.7px;width:9.5px;height:9.5px;border:1px solid #e0e0e0;border-radius:1px;box-sizing:border-box;background:transparent"></div>
<div class="t" style="left:663.00px;top:861.61px;font-size:10.5px;color:#666;font-weight:normal;font-family:'Liberation Sans', sans-serif;">-</div>
<div class="t" style="left:777.50px;top:861.61px;font-size:10.5px;color:#666;font-weight:normal;font-family:'Liberation Sans', sans-serif;">-</div>
<div class="t" style="left:856.00px;top:861.61px;font-size:10.5px;color:#666;font-weight:normal;font-family:'Liberation Sans', sans-serif;">-</div>
<div class="t" style="left:928.50px;top:861.61px;font-size:10.5px;color:#666;font-weight:normal;font-family:'Liberation Sans', sans-serif;">-</div>
<div class="t" style="left:1082.50px;top:861.61px;font-size:10.5px;color:#666;font-weight:normal;font-family:'Liberation Sans', sans-serif;">-</div>
<div class="t" style="left:1173.00px;top:861.61px;font-size:10.5px;color:#444;font-weight:normal;font-family:'Liberation Sans', sans-serif;">7,230.00</div>
</div></body></html>
